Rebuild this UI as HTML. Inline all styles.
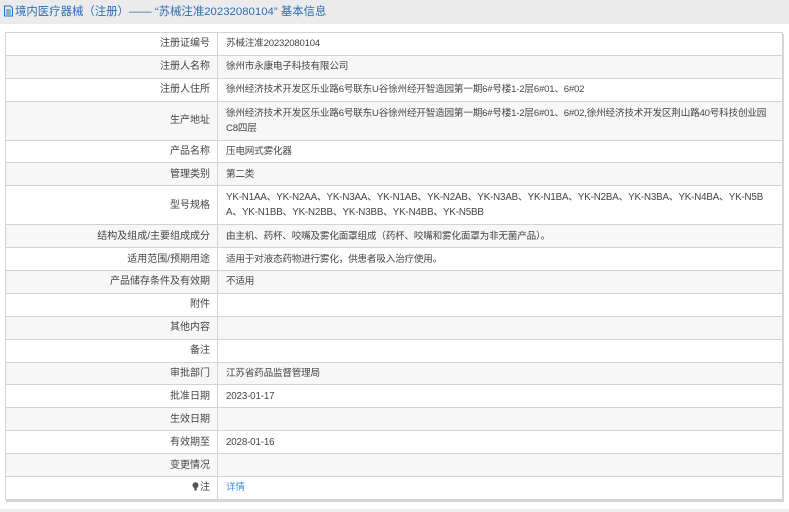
<!DOCTYPE html>
<html><head><meta charset="utf-8">
<style>
html,body{margin:0;padding:0;width:789px;height:512px;overflow:hidden;background:#fff;font-family:"Liberation Sans","Noto Sans CJK SC",sans-serif;}
.hd{height:24px;background:#ebebeb;color:#2a6db5;font-size:11.4px;line-height:24px;padding-left:3px;white-space:nowrap;}
.hd svg{vertical-align:-2px;margin-right:1px}
.bot{position:absolute;left:0;top:509px;width:789px;height:3px;background:#efefef}
table{position:absolute;left:5px;top:32px;width:778px;border-collapse:collapse;border:1px solid #ccc;box-shadow:1px 2px 0 #d6d6d6;font-size:10px;color:#444;table-layout:fixed}
td{border:1px solid #d3d3d3;height:21.9px;padding:0 8px;line-height:15px;white-space:nowrap;overflow:hidden;font-size:9.6px;letter-spacing:-0.2px}
td.l{width:196px;text-align:right;padding-right:7px;padding-left:8px;font-size:10px;letter-spacing:0}
tr:nth-child(even) td{background:#f7f7f7}
tr.t td{height:37.9px}
a{color:#3a8ee6;text-decoration:none}
.y{font-size:9.75px;letter-spacing:-0.15px}
</style></head><body>
<div class="hd"><svg width="11" height="12" viewBox="0 0 11 12"><path d="M1.5 1h6l2 2v8h-8z" fill="none" stroke="#2a6db5"/><path d="M3 5h5M3 7h5M3 9h5" stroke="#2a6db5"/></svg>境内医疗器械（注册）—— “苏械注准20232080104” 基本信息</div>
<table>
<colgroup><col style="width:212px"><col></colgroup>
<tr><td class="l">注册证编号</td><td>苏械注准20232080104</td></tr>
<tr><td class="l">注册人名称</td><td>徐州市永康电子科技有限公司</td></tr>
<tr><td class="l">注册人住所</td><td>徐州经济技术开发区乐业路6号联东U谷徐州经开智造园第一期6#号楼1-2层6#01、6#02</td></tr>
<tr class="t"><td class="l">生产地址</td><td>徐州经济技术开发区乐业路6号联东U谷徐州经开智造园第一期6#号楼1-2层6#01、6#02,徐州经济技术开发区荆山路40号科技创业园<br>C8四层</td></tr>
<tr><td class="l">产品名称</td><td>压电网式雾化器</td></tr>
<tr><td class="l">管理类别</td><td>第二类</td></tr>
<tr class="t"><td class="l">型号规格</td><td class="y">YK-N1AA、YK-N2AA、YK-N3AA、YK-N1AB、YK-N2AB、YK-N3AB、YK-N1BA、YK-N2BA、YK-N3BA、YK-N4BA、YK-N5B<br>A、YK-N1BB、YK-N2BB、YK-N3BB、YK-N4BB、YK-N5BB</td></tr>
<tr><td class="l">结构及组成/主要组成成分</td><td>由主机、药杯、咬嘴及雾化面罩组成（药杯、咬嘴和雾化面罩为非无菌产品）。</td></tr>
<tr><td class="l">适用范围/预期用途</td><td>适用于对液态药物进行雾化，供患者吸入治疗使用。</td></tr>
<tr><td class="l">产品储存条件及有效期</td><td>不适用</td></tr>
<tr><td class="l">附件</td><td></td></tr>
<tr><td class="l">其他内容</td><td></td></tr>
<tr><td class="l">备注</td><td></td></tr>
<tr><td class="l">审批部门</td><td>江苏省药品监督管理局</td></tr>
<tr><td class="l">批准日期</td><td class="y">2023-01-17</td></tr>
<tr><td class="l">生效日期</td><td></td></tr>
<tr><td class="l">有效期至</td><td class="y">2028-01-16</td></tr>
<tr><td class="l">变更情况</td><td></td></tr>
<tr><td class="l"><svg width="7" height="9" viewBox="0 0 7 9" style="vertical-align:-1px;margin-right:1px"><circle cx="3.5" cy="3.3" r="3" fill="#555"/><rect x="2.3" y="6" width="2.4" height="2.5" fill="#555"/></svg>注</td><td><a>详情</a></td></tr>
</table>
<div class="bot"></div>
</body></html>
